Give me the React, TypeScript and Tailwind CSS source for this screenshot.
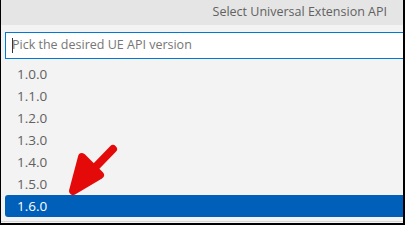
import React from "react";

const versions = ["1.0.0", "1.1.0", "1.2.0", "1.3.0", "1.4.0", "1.5.0", "1.6.0"];

export default function App() {
  return (
    <div
      className="relative w-[405px] h-[225px] overflow-hidden bg-[#f3f3f3] border-l border-r-2 border-b-2 border-black flex flex-col"
      style={{ fontFamily: '"Open Sans", "Noto Sans", sans-serif' }}
    >
      <div className="h-[25px] shrink-0 bg-[#e5e5e5] flex items-center justify-end pr-[16px] text-[12.5px] text-[#616161]">
        Select Universal Extension API
      </div>
      <div className="mt-[7px] ml-[4px] mr-[-4px] h-[27px] shrink-0 bg-white border border-[#0078d4] flex items-center pl-[6px]">
        <span className="w-px h-[15px] bg-[#333]" />
        <span className="text-[12.5px] text-[#767676] ml-[-1px]">Pick the desired UE API version</span>
      </div>
      <div className="mt-[4px] flex flex-col">
        {versions.map((v, i) => {
          const sel = i === versions.length - 1;
          return (
            <div
              key={v}
              className={
                sel
                  ? "ml-[4px] h-[22px] flex items-center pl-[12px] rounded-l-[3px] bg-[#005fb8] text-white text-[13.5px]"
                  : "ml-[4px] h-[22px] flex items-center pl-[12px] text-[#616161] text-[13.5px]"
              }
            >
              {v}
            </div>
          );
        })}
      </div>
      <div className="mt-[4px] h-px bg-[#d6d6d6]" />
      <svg className="absolute left-0 top-0" width="405" height="225">
        <g stroke="#e50a0a" strokeWidth="8" strokeLinecap="round" strokeLinejoin="round" fill="#e50a0a">
          <line x1="112" y1="149" x2="80" y2="182" />
          <polygon points="72,191 81,157 99,175" />
        </g>
      </svg>
    </div>
  );
}
